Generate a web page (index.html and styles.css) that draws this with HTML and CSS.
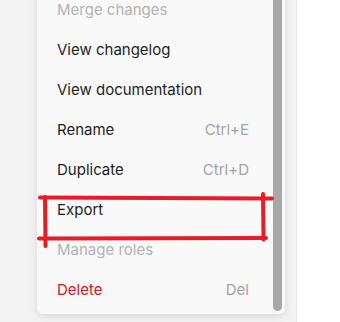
FILE: index.html
```html
<!DOCTYPE html>
<html lang="en">

<head>
    <meta charset="UTF-8">
    <meta name="viewport" content="width=device-width, initial-scale=1.0">
    <title>Context menu</title>
    <link rel="stylesheet" href="styles.css">
</head>

<body>
    <div class="page">
        <div class="side">
            <div class="menu">
                <ul class="menu-items">
                    <li class="item disabled">Merge changes</li>
                    <li class="item">View changelog</li>
                    <li class="item">View documentation</li>
                    <li class="item">Rename <span class="shortcut">Ctrl+E</span></li>
                    <li class="item">Duplicate <span class="shortcut">Ctrl+D</span></li>
                    <li class="item">Export</li>
                    <li class="item disabled">Manage roles</li>
                    <li class="item danger">Delete <span class="shortcut">Del</span></li>
                </ul>
                <div class="scrollbar"></div>
            </div>
        </div>
        <div class="main"></div>
    </div>

    <!-- hand drawn highlight round the Export row -->
    <svg class="markup" width="340" height="322" viewBox="0 0 340 322">
        <g stroke="#e81c24" stroke-width="4" stroke-linecap="round" fill="none">
            <path d="M40 197.5 L272 198.5" />
            <path d="M39 238.5 L266 238" />
            <path d="M45 197 L45.5 246" />
            <path d="M263 194 L263.5 239.5" />
        </g>
    </svg>
</body>

</html>
```

FILE: styles.css
```css
body {
    margin: 0;
    padding: 0;
    font-family: Inter, "Noto Sans", sans-serif;
    background-color: #ffffff;
    overflow: hidden;
}

.page {
    display: flex;
    height: 322px;
}

.side {
    width: 296px;
    background-color: #f3f3f3;
    border-right: 1px solid #e6e6e6;
}

.main {
    flex: 1;
    background-color: #ffffff;
}

.menu {
    display: flex;
    width: 248px;
    margin-left: 37px;
    margin-top: -11px;
    background-color: #f9f9f9;
    border-radius: 0 0 6px 6px;
    box-shadow: 0 2px 8px rgba(0, 0, 0, 0.12);
}

.menu-items {
    flex: 1;
    list-style: none;
    margin: 0;
    padding: 0 24px 5px 20px;
}

.item {
    display: flex;
    align-items: center;
    justify-content: space-between;
    height: 40px;
    font-size: 15px;
    color: #1e1e1e;
}

.item.disabled {
    color: #b3b3b3;
}

.item.danger {
    color: #cc1a1a;
}

.shortcut {
    color: #a3a3a3;
}

.scrollbar {
    width: 9px;
    margin: 0 3px 3px 0;
    background-color: #a8a8a8;
    border-radius: 0 0 5px 5px;
}

.markup {
    position: absolute;
    left: 0;
    top: 0;
    pointer-events: none;
}
```
